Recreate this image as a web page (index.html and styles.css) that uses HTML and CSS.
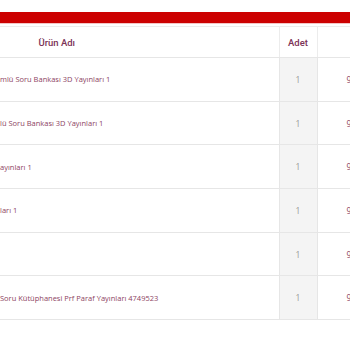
FILE: index.html
```html
<!DOCTYPE html>
<html lang="tr">
<head>
<meta charset="utf-8">
<title>Sepet</title>
<link rel="stylesheet" href="styles.css">
</head>
<body>
<div class="topbar"></div>
<div class="table-wrap">
  <table class="cart">
    <colgroup>
      <col class="col-name">
      <col class="col-qty">
      <col class="col-price">
    </colgroup>
    <thead>
      <tr>
        <th class="th-name">Ürün Adı</th>
        <th class="th-qty">Adet</th>
        <th class="th-price"></th>
      </tr>
    </thead>
    <tbody>
      <tr>
        <td class="name">mlü Soru Bankası 3D Yayınları 1</td>
        <td class="qty">1</td>
        <td class="price">9,90 TL</td>
      </tr>
      <tr>
        <td class="name">lü Soru Bankası 3D Yayınları 1</td>
        <td class="qty">1</td>
        <td class="price">9,90 TL</td>
      </tr>
      <tr>
        <td class="name">ayınları 1</td>
        <td class="qty">1</td>
        <td class="price">9,90 TL</td>
      </tr>
      <tr>
        <td class="name">ları 1</td>
        <td class="qty">1</td>
        <td class="price">9,90 TL</td>
      </tr>
      <tr>
        <td class="name"></td>
        <td class="qty">1</td>
        <td class="price">9,90 TL</td>
      </tr>
      <tr>
        <td class="name">Soru Kütüphanesi Prf Paraf Yayınları 4749523</td>
        <td class="qty">1</td>
        <td class="price">9,90 TL</td>
      </tr>
    </tbody>
  </table>
</div>
</body>
</html>
```

FILE: styles.css
```css
html, body {
  margin: 0;
  padding: 0;
  background: #ffffff;
  overflow: hidden;
}

.topbar {
  margin-top: 12px;
  height: 11px;
  background: #cc0000;
  border-bottom: 1px solid #f3c4c4;
}

.table-wrap {
  margin-top: 2px;
  width: 350px;
  overflow: hidden;
}

.cart {
  border-collapse: collapse;
  table-layout: fixed;
  width: 572px;
  margin-left: -165px;
}

.col-name { width: 444px; }
.col-qty { width: 38px; }
.col-price { width: 90px; }

.cart th {
  height: 30px;
  padding: 0;
  font-family: Roboto, "Liberation Sans", Arial, sans-serif;
  font-weight: 500;
  font-size: 9.5px;
  color: #7b3356;
  text-align: center;
  border-top: 1px solid #ececec;
  border-bottom: 1px solid #e6e6e6;
}

.cart th.th-qty {
  border-left: 1px solid #ececec;
  border-right: 1px solid #ececec;
}

.cart td {
  height: 42.7px;
  padding: 0;
  border-bottom: 1px solid #e6e6e6;
  font-family: "Open Sans", "DejaVu Sans", sans-serif;
  font-size: 7.5px;
  vertical-align: middle;
}

.cart td.name {
  padding-left: 165px;
  text-align: left;
  color: #8d4463;
  white-space: nowrap;
  overflow: hidden;
}

.cart td.qty {
  background: #f4f4f4;
  color: #999999;
  font-size: 8.5px;
  text-align: center;
  border-left: 1px solid #e6e6e6;
  border-right: 1px solid #e6e6e6;
}

.cart td.price {
  text-align: left;
  padding-left: 29px;
  font-size: 8.5px;
  color: #8d4463;
  white-space: nowrap;
}
```
